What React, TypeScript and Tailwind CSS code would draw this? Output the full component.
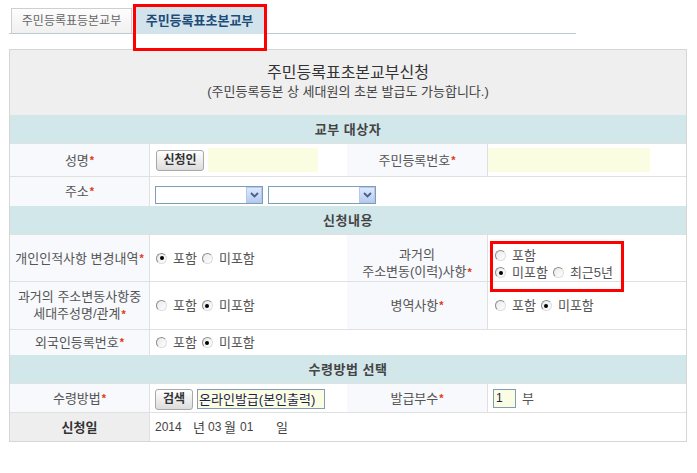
import React from "react";

function Star() {
  return <span className="text-[#e2370f] text-[11px] font-bold ml-[1px]">*</span>;
}

function Radio({ checked = false }: { checked?: boolean }) {
  return (
    <span className="inline-flex w-[11px] h-[11px] shrink-0 rounded-full items-center justify-center border border-t-[#8c8c8c] border-l-[#8c8c8c] border-r-[#dedede] border-b-[#dedede] bg-linear-to-br from-[#e9e9e9] to-white">
      {checked && <span className="w-[4px] h-[4px] rounded-full bg-black" />}
    </span>
  );
}

function RadioItem({ label, checked = false }: { label: string; checked?: boolean }) {
  return (
    <span className="inline-flex items-center mr-[5px]">
      <Radio checked={checked} />
      <span className="ml-[6px]">{label}</span>
    </span>
  );
}

function Select() {
  return (
    <div className="w-[108px] h-[18px] border border-[#7f9db9] bg-white flex items-center justify-end pr-0">
      <div className="w-[16px] h-[16px] border border-[#b4c7ec] bg-linear-to-b from-[#dde8fd] to-[#b7cbf1] flex items-center justify-center">
        <svg width="9" height="6" viewBox="0 0 9 6">
          <path d="M1 1 L4.5 4.5 L8 1" stroke="#4b5f86" strokeWidth="1.8" fill="none" />
        </svg>
      </div>
    </div>
  );
}

function Btn({ children, w }: { children: React.ReactNode; w: string }) {
  return (
    <div
      className={`${w} h-[21px] rounded-[3px] border border-[#a8a8a8] bg-linear-to-b from-white to-[#dcdcdc] flex items-center justify-center text-[12px] font-bold text-[#333]`}
    >
      {children}
    </div>
  );
}

function SectionHeader({ children }: { children: React.ReactNode }) {
  return (
    <div className="h-[28px] bg-[#d2e7ea] flex items-center justify-center text-[13px] font-bold text-[#444] tracking-[0.5px]">
      {children}
    </div>
  );
}

const label = "bg-[#f7f9fc] flex items-center justify-center text-center";
const value = "border-l border-[#e0e0e0] flex items-center pl-[6px]";
const row = "grid grid-cols-[139px_198px_140px_199px] border-t border-[#e0e0e0]";

export default function App() {
  return (
    <div className="relative w-[697px] h-[473px] bg-white overflow-hidden font-['Liberation_Sans','Noto_Sans_CJK_KR',sans-serif] text-[13px] text-[#555] leading-[17px]">
      {/* Tabs */}
      <div className="pt-[7px] pl-[9px]">
        <div className="w-[567px] h-[27px] border-b border-[#bccbcf] flex items-end pl-[2px] gap-[2px]">
          <div className="w-[121px] h-[25px] border border-b-0 border-[#cfcfcf] bg-linear-to-b from-[#fdfdfd] to-[#f0f0f0] flex items-center justify-center text-[12px] text-[#666]">
            주민등록표등본교부
          </div>
          <div className="w-[131px] h-[27px] -mb-px bg-[#d3e3ec] flex items-center justify-center text-[13px] font-bold text-[#1d4c78]">
            주민등록표초본교부
          </div>
        </div>
      </div>

      {/* Form */}
      <div className="ml-[9px] mt-[15px] w-[678px] border border-[#d6d6d6]">
        <div className="h-[65px] bg-[#efefef] flex flex-col items-center pt-[13px]">
          <div className="text-[16px] leading-[20px] text-[#333]">주민등록표초본교부신청</div>
          <div className="text-[13px] leading-[17px] text-[#444]">
            (주민등록등본 상 세대원의 초본 발급도 가능합니다.)
          </div>
        </div>

        <SectionHeader>교부 대상자</SectionHeader>

        {/* 성명 */}
        <div className={`${row} h-[33px]`}>
          <div className={label}>
            성명
            <Star />
          </div>
          <div className={`${value} pl-[5px]`}>
            <Btn w="w-[48px]">신청인</Btn>
            <div className="ml-[4px] w-[110px] h-[24px] bg-[#fbfde2]" />
          </div>
          <div className={label}>
            주민등록번호
            <Star />
          </div>
          <div className="border-l border-[#e0e0e0] flex items-center pl-0">
            <div className="w-[162px] h-[24px] bg-[#fbfde2]" />
          </div>
        </div>

        {/* 주소 */}
        <div className={`${row} h-[30px]`}>
          <div className={label}>
            주소
            <Star />
          </div>
          <div className="col-span-3 border-l border-[#e0e0e0] flex items-start pt-[9px] pl-[5px] gap-[5px]">
            <Select />
            <Select />
          </div>
        </div>

        <SectionHeader>신청내용</SectionHeader>

        {/* 개인인적사항 */}
        <div className={`${row} h-[47px]`}>
          <div className={label}>
            개인인적사항 변경내역
            <Star />
          </div>
          <div className={value}>
            <RadioItem label="포함" checked />
            <RadioItem label="미포함" />
          </div>
          <div className="bg-[#f7f9fc] flex flex-col justify-end items-center text-center">
            <div>과거의</div>
            <div>
              주소변동(이력)사항
              <Star />
            </div>
          </div>
          <div className="border-l border-[#e0e0e0] flex flex-col justify-end pl-[7px]">
            <div className="flex items-center h-[17px]">
              <RadioItem label="포함" />
            </div>
            <div className="flex items-center h-[17px]">
              <RadioItem label="미포함" checked />
              <RadioItem label="최근5년" />
            </div>
          </div>
        </div>

        {/* 과거의 주소변동사항중 */}
        <div className={`${row} h-[48px]`}>
          <div className="bg-[#f7f9fc] flex flex-col items-center justify-center text-center">
            <div>과거의 주소변동사항중</div>
            <div>
              세대주성명/관계
              <Star />
            </div>
          </div>
          <div className={value}>
            <RadioItem label="포함" />
            <RadioItem label="미포함" checked />
          </div>
          <div className={label}>
            병역사항
            <Star />
          </div>
          <div className={`${value} pl-[7px]`}>
            <RadioItem label="포함" />
            <RadioItem label="미포함" checked />
          </div>
        </div>

        {/* 외국인등록번호 */}
        <div className={`${row} h-[26px]`}>
          <div className={label}>
            외국인등록번호
            <Star />
          </div>
          <div className={`${value} col-span-3`}>
            <RadioItem label="포함" />
            <RadioItem label="미포함" checked />
          </div>
        </div>

        <SectionHeader>수령방법 선택</SectionHeader>

        {/* 수령방법 */}
        <div className={`${row} h-[29px]`}>
          <div className={label}>
            수령방법
            <Star />
          </div>
          <div className="border-l border-[#e0e0e0] flex items-start pt-[5px] pl-[5px]">
            <Btn w="w-[38px]">검색</Btn>
            <div className="ml-[4px] w-[128px] h-[20px] border border-[#7f9db9] bg-[#fbfde2] flex items-center pl-[1px] text-[13px] text-[#1b2352] whitespace-nowrap overflow-hidden">
              온라인발급(본인출력)
            </div>
          </div>
          <div className={label}>
            발급부수
            <Star />
          </div>
          <div className="border-l border-[#e0e0e0] flex items-start pt-[5px] pl-[5px]">
            <div className="w-[23px] h-[19px] border border-[#7f9db9] bg-[#fbfde2] flex items-center pl-[2px] text-[12px] text-[#1b2352]">
              1
            </div>
            <span className="ml-[6px] leading-[19px]">부</span>
          </div>
        </div>

        {/* 신청일 */}
        <div className={`${row} h-[29px]`}>
          <div className="bg-[#eeeeee] flex items-center justify-center font-bold text-[#333]">신청일</div>
          <div className="col-span-3 border-l border-[#e0e0e0] flex items-center pl-[5px] text-[#444] text-[12px]">
            <span className="w-[38px]">2014</span>
            <span className="w-[15px] text-[13px]">년</span>
            <span className="w-[16px]">03</span>
            <span className="w-[16px] text-[13px]">월</span>
            <span className="w-[36px]">01</span>
            <span className="text-[13px]">일</span>
          </div>
        </div>
      </div>

      {/* Red annotation boxes */}
      <div className="absolute left-[133px] top-[4px] w-[134px] h-[47px] border-[3px] border-[#ff0000] pointer-events-none" />
      <div className="absolute left-[490px] top-[241px] w-[134px] h-[51px] border-[3px] border-[#ff0000] pointer-events-none" />
    </div>
  );
}
